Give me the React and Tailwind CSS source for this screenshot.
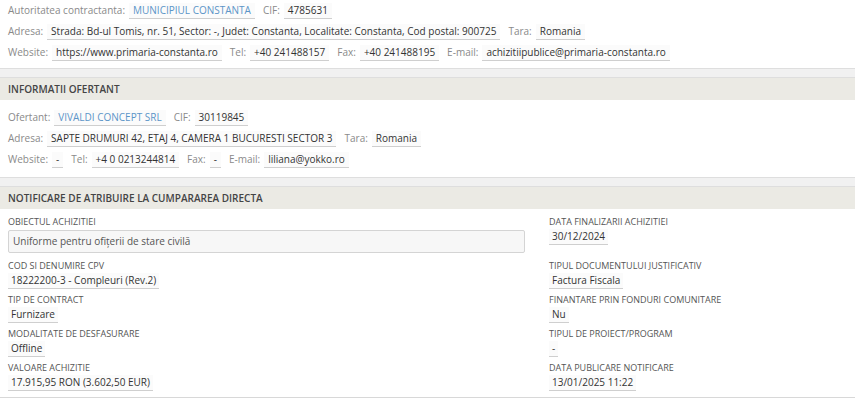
import React from 'react';

const font = { fontFamily: '"Open Sans", "DejaVu Sans", sans-serif' };

const Label = ({ children }) => (
    <span className="text-[#8a8a8a] mr-[4px]">{children}</span>
);

const Val = ({ children, link }) => (
    <span className={`inline-block px-[4px] leading-[15px] bg-[#fbfbfb] border-b border-[#cfcfcf] mr-[8px] ${link ? 'text-[#5b95c8]' : 'text-[#333]'}`}>
        {children}
    </span>
);

const Row = ({ children }) => (
    <div className="flex items-center h-[21px] px-[8px] text-[10px] whitespace-nowrap">{children}</div>
);

const Gap = () => (
    <div className="h-[10px] bg-[#f1f1f1] border-t border-b border-[#dedede]"></div>
);

const Header = ({ children }) => (
    <div className="h-[22px] flex items-center px-[8px] bg-[#ebeae4] text-[10px] font-semibold text-[#444]">
        {children}
    </div>
);

const FieldLabel = ({ children }) => (
    <div className="text-[9px] text-[#555] uppercase leading-[10px]">{children}</div>
);

const Field = ({ label, children, className = '' }) => (
    <div className={className}>
        <FieldLabel>{label}</FieldLabel>
        <div className="mt-[2px] flex">
            <span className="px-[3px] text-[10px] leading-[15px] text-[#333] bg-[#fbfbfb] border-b border-[#cfcfcf]">
                {children}
            </span>
        </div>
    </div>
);

export default function App() {
    return (
        <div className="w-[855px] h-[399px] bg-white overflow-hidden" style={font}>
            {/* autoritate */}
            <div className="border-t border-[#e2e2e2] -mt-[1px] pb-[5px]">
                <Row>
                    <Label>Autoritatea contractanta:</Label>
                    <Val link>MUNICIPIUL CONSTANTA</Val>
                    <Label>CIF:</Label>
                    <Val>4785631</Val>
                </Row>
                <Row>
                    <Label>Adresa:</Label>
                    <Val>Strada: Bd-ul Tomis, nr. 51, Sector: -, Judet: Constanta, Localitate: Constanta, Cod postal: 900725</Val>
                    <Label>Tara:</Label>
                    <Val>Romania</Val>
                </Row>
                <Row>
                    <Label>Website:</Label>
                    <Val>https://www.primaria-constanta.ro</Val>
                    <Label>Tel:</Label>
                    <Val>+40 241488157</Val>
                    <Label>Fax:</Label>
                    <Val>+40 241488195</Val>
                    <Label>E-mail:</Label>
                    <Val>achizitiipublice@primaria-constanta.ro</Val>
                </Row>
            </div>

            <Gap />

            {/* ofertant */}
            <Header>INFORMATII OFERTANT</Header>
            <div className="pt-[7px] pb-[7px]">
                <Row>
                    <Label>Ofertant:</Label>
                    <Val link>VIVALDI CONCEPT SRL</Val>
                    <Label>CIF:</Label>
                    <Val>30119845</Val>
                </Row>
                <Row>
                    <Label>Adresa:</Label>
                    <Val>SAPTE DRUMURI 42, ETAJ 4, CAMERA 1 BUCURESTI SECTOR 3</Val>
                    <Label>Tara:</Label>
                    <Val>Romania</Val>
                </Row>
                <Row>
                    <Label>Website:</Label>
                    <Val>-</Val>
                    <Label>Tel:</Label>
                    <Val>+4 0 0213244814</Val>
                    <Label>Fax:</Label>
                    <Val>-</Val>
                    <Label>E-mail:</Label>
                    <Val>liliana@yokko.ro</Val>
                </Row>
            </div>

            <Gap />

            {/* notificare */}
            <Header>NOTIFICARE DE ATRIBUIRE LA CUMPARAREA DIRECTA</Header>
            <div className="grid grid-cols-[541px_1fr] gap-y-[6px] px-[8px] pt-[8px] pb-[6px] border-b border-[#d8d8d8]">
                <div className="mb-[2px]">
                    <FieldLabel>OBIECTUL ACHIZITIEI</FieldLabel>
                    <div className="mt-[3px] w-[517px] h-[23px] flex items-center px-[4px] bg-[#f7f7f7] border border-[#d4d4d4] rounded-[2px] text-[10px] text-[#555]">
                        Uniforme pentru ofițerii de stare civilă
                    </div>
                </div>
                <Field label="DATA FINALIZARII ACHIZITIEI">30/12/2024</Field>

                <Field label="COD SI DENUMIRE CPV">18222200-3 - Compleuri (Rev.2)</Field>
                <Field label="TIPUL DOCUMENTULUI JUSTIFICATIV">Factura Fiscala</Field>

                <Field label="TIP DE CONTRACT">Furnizare</Field>
                <Field label="FINANTARE PRIN FONDURI COMUNITARE">Nu</Field>

                <Field label="MODALITATE DE DESFASURARE">Offline</Field>
                <Field label="TIPUL DE PROIECT/PROGRAM">-</Field>

                <Field label="VALOARE ACHIZITIE">17.915,95 RON (3.602,50 EUR)</Field>
                <Field label="DATA PUBLICARE NOTIFICARE">13/01/2025 11:22</Field>
            </div>
        </div>
    );
}
